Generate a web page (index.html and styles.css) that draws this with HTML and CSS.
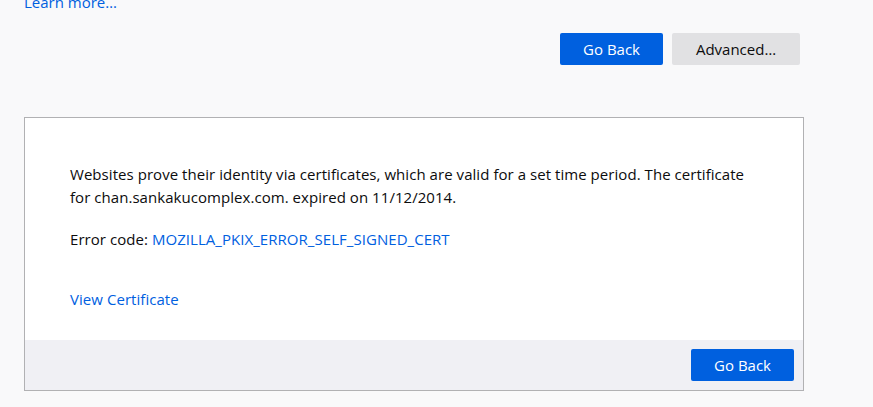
FILE: index.html
```html
<!DOCTYPE html>
<html lang="en">

<head>
    <meta charset="UTF-8" />
    <meta name="viewport" content="width=device-width, initial-scale=1" />
    <title>Warning: Potential Security Risk Ahead</title>
    <link rel="stylesheet" href="styles.css">
</head>

<body>

    <!-- intro (scrolled up, only the link peeks in) -->
    <main class="container">
        <p class="learn-more"><a href="#">Learn more…</a></p>

        <div class="button-row">
            <button class="btn primary">Go Back</button>
            <button class="btn">Advanced…</button>
        </div>

        <!-- advanced panel -->
        <section class="advanced-panel">
            <div class="panel-body">
                <p>Websites prove their identity via certificates, which are valid for a set time period. The certificate
                    for chan.sankakucomplex.com. expired on 11/12/2014.</p>
                <p>Error code: <a href="#" class="error-code">MOZILLA_PKIX_ERROR_SELF_SIGNED_CERT</a></p>
                <p class="view-cert"><a href="#">View Certificate</a></p>
            </div>
            <div class="panel-footer">
                <button class="btn primary">Go Back</button>
            </div>
        </section>
    </main>

</body>

</html>
```

FILE: styles.css
```css
* {
    box-sizing: border-box;
}

body {
    margin: 0;
    font-family: "Open Sans", "Noto Sans", sans-serif;
    font-size: 15px;
    background: #f9f9fa;
    color: #0c0c0d;
}

a {
    color: #0060df;
    text-decoration: none;
}

/* --- PAGE --- */
.container {
    width: 780px;
    margin-left: 24px;
}

.learn-more {
    margin: -9px 0 0;
    line-height: 22px;
}

.button-row {
    display: flex;
    justify-content: flex-end;
    gap: 9px;
    margin-top: 20px;
    padding-right: 4px;
}

/* --- BUTTONS --- */
.btn {
    font-family: inherit;
    font-size: 15px;
    height: 32px;
    padding: 0 23px;
    border: none;
    border-radius: 2px;
    background: #e1e1e3;
    color: #0c0c0d;
    cursor: pointer;
}

.btn.primary {
    background: #0060df;
    color: white;
}

.btn + .btn {
    width: 128px;
}

/* --- ADVANCED PANEL --- */
.advanced-panel {
    margin-top: 52px;
    background: white;
    border: 1px solid #b1b1b3;
}

.panel-body {
    padding: 45px 45px 29px;
}

.panel-body p {
    margin: 0 0 19px;
    line-height: 23px;
    letter-spacing: 0.05px;
}

.panel-body .view-cert {
    margin: 37px 0 0;
}

.panel-footer {
    display: flex;
    justify-content: flex-end;
    padding: 9px;
    background: #f0f0f4;
}
```
